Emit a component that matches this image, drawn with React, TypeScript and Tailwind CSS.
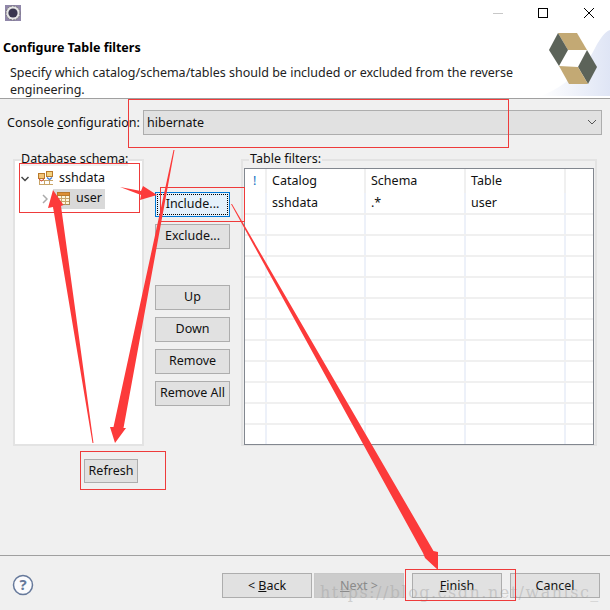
import type { ReactNode } from 'react';

const FONT = "font-['Noto_Sans','Open_Sans',sans-serif]";

function WizButton({ children, className = '' }: { children: ReactNode; className?: string }) {
  return (
    <button className={`flex h-[25px] items-center justify-center border border-[#adadad] bg-[#e1e1e1] text-[12.5px] text-[#111] ${className}`}>
      {children}
    </button>
  );
}

function TableIcon() {
  return (
    <svg width="13" height="13" viewBox="0 0 13 13" className="shrink-0">
      <rect x="0.5" y="0.5" width="12" height="12" fill="#fdf6dc" stroke="#a98a55" />
      <rect x="0.5" y="0.5" width="12" height="3" fill="#dc8f35" stroke="#b8792c" />
      <path d="M4.5 4v8.5M8.5 4v8.5M1 6.5h11M1 9.5h11" stroke="#c8a468" fill="none" />
    </svg>
  );
}

function SchemaIcon() {
  return (
    <svg width="16" height="15" viewBox="0 0 16 15" className="ml-[9px]">
      <path d="M1 9.5H15M1 13.5H15M1.5 9V14M6.5 9V14M11.5 9V14" stroke="#c8a468" fill="none" />
      <rect x="0.5" y="2.5" width="6" height="5" fill="#f3c477" stroke="#b8792c" />
      <path d="M1 8L3.5 10L6 8" stroke="#d8403a" fill="none" />
      <rect x="8.5" y="0.5" width="6" height="5" fill="#f3d27f" stroke="#b8792c" />
      <path d="M9 6.5L11.5 8.5L14 6.5" stroke="#4a7fd0" strokeWidth="1.4" fill="none" />
    </svg>
  );
}

function Logo() {
  return (
    <svg width="70" height="66" viewBox="0 0 70 66" className="absolute right-0 top-0">
      <defs>
        <linearGradient id="bannerFade" x1="0" y1="0" x2="1" y2="0">
          <stop offset="0" stopColor="#ffffff" />
          <stop offset="1" stopColor="#dfe5f5" />
        </linearGradient>
      </defs>
      <path d="M0 66C20 60 44 40 54 20C58 12 64 2 70 0V66Z" fill="url(#bannerFade)" />
      <path d="M18 3L37 3L47 20L28 20Z" fill="#c3a974" />
      <path d="M9 20L18 3L28 20L19 36Z" fill="#5c6359" />
      <path d="M38 37L47 20L57 37L48 54Z" fill="#5c6359" />
      <path d="M19 36L38 37L48 54L29 54Z" fill="#c3a974" />
    </svg>
  );
}

function Annotations() {
  return (
    <svg width="610" height="610" viewBox="0 0 610 610" className="pointer-events-none absolute left-0 top-0">
      <g fill="none" stroke="#ee3b3b" strokeWidth="1">
        <rect x="128.5" y="99.5" width="380" height="48" />
        <rect x="19.5" y="163.5" width="120" height="49" />
        <rect x="160.5" y="187.5" width="84" height="34" />
        <rect x="80.5" y="451.5" width="85" height="38" />
        <rect x="405.5" y="569.5" width="110" height="31" />
      </g>
      <g fill="#fc3a3a">
        <path d="M92.5 443L93.5 443L61 206L63.5 205L53 190L48 208L53 207Z" />
        <path d="M173.5 150L174.5 150L123.5 428L126 428L115 443L110 427L113.5 427Z" />
        <path d="M120 187L141 191L143 186L157 195L140 200L141 195Z" />
        <path d="M231 204L232 204L433.5 551L438 552L438 570L425 558L423 553Z" />
      </g>
    </svg>
  );
}

export default function App() {
  const cols = [
    { w: 'w-[22px]', label: '!', cell: '' },
    { w: 'w-[99px]', label: 'Catalog', cell: 'sshdata' },
    { w: 'w-[100px]', label: 'Schema', cell: '.*' },
    { w: 'w-[100px]', label: 'Table', cell: 'user' },
    { w: 'flex-1', label: '', cell: '' },
  ];
  const emptyRows = Array.from({ length: 11 });

  return (
    <div className={`relative flex h-[610px] w-[610px] flex-col overflow-hidden bg-[#f0f0f0] text-[12.5px] text-[#111] ${FONT}`}>
      {/* title bar */}
      <div className="flex h-[30px] items-start justify-between bg-white">
        <svg width="16" height="16" viewBox="0 0 16 16" className="ml-[5px] mt-[5px]">
          <rect width="16" height="16" fill="#8f86a8" />
          <circle cx="8" cy="8" r="7" fill="#e6e6e6" stroke="#777" strokeDasharray="2 1" />
          <circle cx="8" cy="8" r="4.6" fill="#39364f" />
        </svg>
        <div className="mr-[16px] mt-[8px] flex items-center">
          <div className="mr-[35px] h-px w-[10px] bg-[#c8c8c8]" />
          <div className="mr-[36px] h-[10px] w-[10px] border border-black" />
          <svg width="10" height="10" viewBox="0 0 10 10">
            <path d="M0 0L10 10M10 0L0 10" stroke="#000" strokeWidth="1" fill="none" />
          </svg>
        </div>
      </div>

      {/* wizard header */}
      <div className="relative h-[69px] border-b border-[#a0a0a0] bg-white">
        <div className="ml-[3px] mt-[9px] h-[18px] text-[12.5px] font-bold leading-[18px] text-black">Configure Table filters</div>
        <p className="ml-[10px] mt-[7px] w-[520px] text-[12.5px] leading-[17px] text-[#222]">
          Specify which catalog/schema/tables should be included or excluded from the reverse engineering.
        </p>
        <Logo />
      </div>

      {/* console configuration */}
      <div className="ml-[7px] mr-[8px] mt-[11px] flex h-[25px] items-center">
        <span className="w-[136px] shrink-0 whitespace-nowrap pt-[2px]">
          Console <span className="underline">c</span>onfiguration:
        </span>
        <div className="flex h-[25px] flex-1 items-center justify-between border border-[#adadad] bg-[#e1e1e1] pl-[3px] pr-[4px]">
          <span className="pt-[2px]">hibernate</span>
          <svg width="10" height="6" viewBox="0 0 10 6">
            <path d="M1 1L5 5L9 1" stroke="#555" fill="none" />
          </svg>
        </div>
      </div>

      {/* main area */}
      <div className="mt-[24px] flex h-[287px] items-start">
        <fieldset className="ml-[13px] h-[287px] w-[131px] border-2 border-[#e3e3e3] bg-white">
          <div className="relative h-full">
            <span className="absolute left-[6px] top-[-9px] bg-[#f0f0f0] leading-[14px]">Database schema:</span>
            <div className="flex h-[20px] items-center pl-[6px] pt-[16px]">
              <svg width="8" height="6" viewBox="0 0 8 6" className="mt-[1px]">
                <path d="M0.5 1L4 4.5L7.5 1" stroke="#444" strokeWidth="1.5" fill="none" />
              </svg>
              <SchemaIcon />
              <span className="ml-[5px]">sshdata</span>
            </div>
            <div className="mt-[8px] flex h-[20px] items-center pl-[27px]">
              <svg width="6" height="10" viewBox="0 0 6 10">
                <path d="M1 1L5 5L1 9" stroke="#aaa" strokeWidth="1.5" fill="none" />
              </svg>
              <div className="ml-[5px] flex h-[20px] w-[52px] items-center bg-[#d9d9d9] pl-[4px]">
                <TableIcon />
                <span className="ml-[6px]">user</span>
              </div>
            </div>
          </div>
        </fieldset>

        <div className="ml-[11px] mt-[33px] flex w-[75px] flex-col">
          <button className="flex h-[25px] items-center justify-center border border-[#0078d7] bg-[#e5f1fb] text-[12.5px] text-[#111] outline-1 -outline-offset-3 outline-dotted outline-black">
            Include...
          </button>
          <WizButton className="mt-[7px]">Exclude...</WizButton>
          <WizButton className="mt-[36px]">Up</WizButton>
          <WizButton className="mt-[7px]">Down</WizButton>
          <WizButton className="mt-[7px]">Remove</WizButton>
          <WizButton className="mt-[7px]">Remove All</WizButton>
        </div>

        <fieldset className="relative ml-[11px] h-[287px] w-[356px] border-2 border-[#e3e3e3] px-px pt-[7px]">
          <span className="absolute left-[6px] top-[-9px] bg-[#f0f0f0] px-px leading-[14px]">Table filters:</span>
          <div className="flex h-[277px] flex-col overflow-hidden border border-[#82878f] bg-white">
            <div className="flex h-[24px] shrink-0">
              {cols.map((c) => (
                <div key={c.label || 'end'} className={`${c.w} flex items-center border-r-2 border-[#f0f0f0] pt-[2px] last:border-r-0 ${c.label === '!' ? 'pl-[8px] text-[#1070c0]' : 'pl-[5px]'}`}>
                  {c.label}
                </div>
              ))}
            </div>
            <div className="flex h-[22px] shrink-0 border-b-2 border-[#f0f0f0]">
              {cols.map((c) => (
                <div key={c.label || 'end'} className={`${c.w} flex items-center border-r-2 border-[#edf1f9] pl-[5px] pt-[2px] last:border-r-0`}>
                  {c.cell}
                </div>
              ))}
            </div>
            {emptyRows.map((_, i) => (
              <div key={i} className="flex h-[21px] shrink-0 border-b-2 border-[#f0f0f0]">
                {cols.map((c) => (
                  <div key={c.label || 'end'} className={`${c.w} border-r-2 border-[#edf1f9] last:border-r-0`} />
                ))}
              </div>
            ))}
          </div>
        </fieldset>
      </div>

      {/* refresh */}
      <WizButton className="ml-[84px] mt-[13px] w-[54px] pt-px">Refresh</WizButton>

      {/* footer */}
      <div className="mt-[72px] flex h-[55px] border-t border-[#a0a0a0] pt-[17px]">
        <svg width="22" height="22" viewBox="0 0 22 22" className="ml-[12px] mt-px">
          <circle cx="11" cy="11" r="9.5" fill="#fbfbfd" stroke="#66799b" strokeWidth="1.5" />
          <text x="11" y="16" textAnchor="middle" fontSize="15" fontWeight="700" fill="#66799b">?</text>
        </svg>
        <div className="ml-[188px] flex">
          <WizButton className="w-[90px] pt-px">
            &lt;&nbsp;<span className="underline">B</span>ack
          </WizButton>
          <button className="ml-[2px] flex h-[25px] w-[90px] items-center justify-center border border-[#c8c8c8] bg-[#cccccc] pt-px text-[12.5px] text-[#8a8a8a]">
            <span className="underline">N</span>ext &gt;
          </button>
          <WizButton className="ml-[8px] w-[90px] pt-px">
            <span className="underline">F</span>inish
          </WizButton>
          <WizButton className="ml-[8px] w-[90px] pt-px">Cancel</WizButton>
        </div>
      </div>

      <span className="absolute left-[320px] top-[581px] font-['DejaVu_Serif',serif] text-[16px] tracking-[1.5px] whitespace-nowrap text-[#9a9a9a]/40">
        https://blog.csdn.net/wanlsc_
      </span>
      <Annotations />
    </div>
  );
}
